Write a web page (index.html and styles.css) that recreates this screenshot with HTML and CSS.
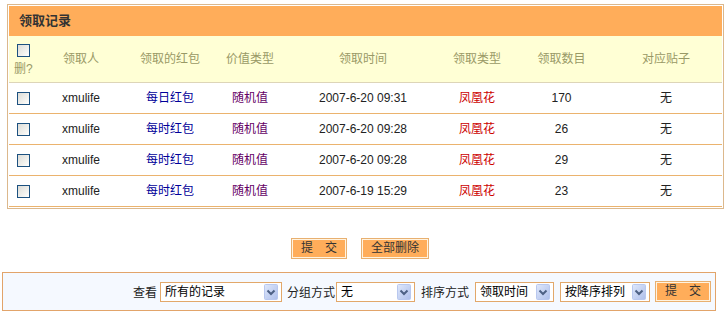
FILE: index.html
```html
<!DOCTYPE html>
<html lang="zh-CN">
<head>
    <meta charset="UTF-8">
    <title>领取记录</title>
    <link rel="stylesheet" href="styles.css">
</head>
<body>
    <div class="record_box">
        <table class="record_table">
            <colgroup>
                <col style="width:28px">
                <col style="width:88px">
                <col style="width:90px">
                <col style="width:70px">
                <col style="width:156px">
                <col style="width:72px">
                <col style="width:97px">
                <col style="width:112px">
            </colgroup>
            <tr class="title_row">
                <td colspan="8">领取记录</td>
            </tr>
            <tr class="head_row">
                <td class="del_cell"><input type="checkbox" class="chk"><br>删?</td>
                <td>领取人</td>
                <td>领取的红包</td>
                <td>价值类型</td>
                <td>领取时间</td>
                <td>领取类型</td>
                <td>领取数目</td>
                <td>对应贴子</td>
            </tr>
            <tr class="data_row">
                <td><input type="checkbox" class="chk"></td>
                <td>xmulife</td>
                <td class="packet">每日红包</td>
                <td class="value_type">随机值</td>
                <td>2007-6-20 09:31</td>
                <td class="get_type">凤凰花</td>
                <td>170</td>
                <td>无</td>
            </tr>
            <tr class="data_row">
                <td><input type="checkbox" class="chk"></td>
                <td>xmulife</td>
                <td class="packet">每时红包</td>
                <td class="value_type">随机值</td>
                <td>2007-6-20 09:28</td>
                <td class="get_type">凤凰花</td>
                <td>26</td>
                <td>无</td>
            </tr>
            <tr class="data_row">
                <td><input type="checkbox" class="chk"></td>
                <td>xmulife</td>
                <td class="packet">每时红包</td>
                <td class="value_type">随机值</td>
                <td>2007-6-20 09:28</td>
                <td class="get_type">凤凰花</td>
                <td>29</td>
                <td>无</td>
            </tr>
            <tr class="data_row">
                <td><input type="checkbox" class="chk"></td>
                <td>xmulife</td>
                <td class="packet">每时红包</td>
                <td class="value_type">随机值</td>
                <td>2007-6-19 15:29</td>
                <td class="get_type">凤凰花</td>
                <td>23</td>
                <td>无</td>
            </tr>
        </table>
    </div>

    <div class="actions">
        <button class="btn">提　交</button>
        <button class="btn">全部删除</button>
    </div>

    <div class="filter_bar">
        <span class="label">查看</span>
        <span class="sel sel_view">
            <select><option>所有的记录</option></select>
            <svg class="arrow" width="14" height="16" viewBox="0 0 14 16">
                <defs>
                    <linearGradient id="ag" x1="0" y1="0" x2="1" y2="1">
                        <stop offset="0" stop-color="#dfe8fb"/>
                        <stop offset="1" stop-color="#aebfeb"/>
                    </linearGradient>
                </defs>
                <rect x="0.5" y="0.5" width="13" height="15" rx="1" fill="url(#ag)" stroke="#b9c8ef"/>
                <path d="M3.5 6.5 L7 10 L10.5 6.5" fill="none" stroke="#4d6185" stroke-width="2"/>
            </svg>
        </span>
        <span class="label label_group">分组方式</span>
        <span class="sel sel_group">
            <select><option>无</option></select>
            <svg class="arrow" width="14" height="16" viewBox="0 0 14 16">
                <rect x="0.5" y="0.5" width="13" height="15" rx="1" fill="url(#ag)" stroke="#b9c8ef"/>
                <path d="M3.5 6.5 L7 10 L10.5 6.5" fill="none" stroke="#4d6185" stroke-width="2"/>
            </svg>
        </span>
        <span class="label label_sort">排序方式</span>
        <span class="sel sel_sort">
            <select><option>领取时间</option></select>
            <svg class="arrow" width="14" height="16" viewBox="0 0 14 16">
                <rect x="0.5" y="0.5" width="13" height="15" rx="1" fill="url(#ag)" stroke="#b9c8ef"/>
                <path d="M3.5 6.5 L7 10 L10.5 6.5" fill="none" stroke="#4d6185" stroke-width="2"/>
            </svg>
        </span>
        <span class="sel sel_order">
            <select><option>按降序排列</option></select>
            <svg class="arrow" width="14" height="16" viewBox="0 0 14 16">
                <rect x="0.5" y="0.5" width="13" height="15" rx="1" fill="url(#ag)" stroke="#b9c8ef"/>
                <path d="M3.5 6.5 L7 10 L10.5 6.5" fill="none" stroke="#4d6185" stroke-width="2"/>
            </svg>
        </span>
        <button class="btn btn_small">提　交</button>
    </div>
</body>
</html>
```
FILE: styles.css
```css
*{
    margin:0;
    padding:0;
}
body{
    font-family:"Liberation Sans","Noto Sans CJK SC",sans-serif;
    font-size:12px;
    color:#222;
    background:#fff;
}
.record_box{
    margin:4px 3px 0 7px;
    border:1px solid #dcb88c;
    padding:1px;
    background:#fff;
}
.record_table{
    width:100%;
    table-layout:fixed;
    border-collapse:separate;
    border-spacing:0;
}
.record_table td{
    padding:0;
    text-align:center;
    vertical-align:middle;
    line-height:16px;
}
.title_row td{
    height:30px;
    background:#ffad5a;
    text-align:left;
    padding-left:10px;
    font-weight:bold;
    font-size:13px;
    color:#333;
}
.head_row td{
    box-sizing:border-box;
    height:47px;
    background:#ffffd5;
    color:#999966;
    border-bottom:1px solid #ddd5b8;
}
.head_row .del_cell{
    text-align:left;
    padding-left:5px;
    padding-top:2px;
}
.head_row .del_cell .chk{
    margin-left:3px;
    margin-bottom:4px;
}
.data_row td{
    box-sizing:border-box;
    height:31px;
    border-bottom:1px solid #ebb36e;
    color:#222;
}
.data_row .packet{
    color:#000099;
}
.data_row .value_type{
    color:#660066;
}
.data_row .get_type{
    color:#cc0000;
}
.chk{
    -webkit-appearance:none;
    appearance:none;
    display:inline-block;
    width:13px;
    height:13px;
    border:1px solid #1c5180;
    background:linear-gradient(135deg,#dcdcd7 0%,#f4f4f1 70%,#ffffff 100%);
    vertical-align:middle;
}
.actions{
    display:flex;
    justify-content:center;
    gap:14px;
    margin-top:29px;
    padding-right:7px;
}
.btn{
    width:56px;
    height:21px;
    border:1px solid #e8b070;
    box-shadow:inset 0 0 0 1px #fff3e0;
    background:#ffad5a;
    font-family:"Liberation Sans","Noto Sans CJK SC",sans-serif;
    font-size:12px;
    color:#333;
    line-height:19px;
    cursor:pointer;
}
.actions .btn + .btn{
    width:68px;
}
.filter_bar{
    display:flex;
    align-items:center;
    justify-content:flex-end;
    width:714px;
    height:39px;
    box-sizing:border-box;
    margin:13px 0 0 2px;
    padding-right:4px;
    border:1px solid #e2a46a;
    background:#f5f9ff;
    color:#222;
}
.label{
    margin-right:3px;
}
.label_group{
    margin-left:5px;
    margin-right:1px;
}
.label_sort{
    margin-left:6px;
    margin-right:6px;
}
.sel{
    position:relative;
    display:inline-block;
    height:20px;
}
.sel select{
    -webkit-appearance:none;
    appearance:none;
    height:20px;
    border:1px solid #e2a86a;
    border-radius:0;
    background:#fff;
    font-family:"Liberation Sans","Noto Sans CJK SC",sans-serif;
    font-size:12px;
    color:#000;
    padding:0 18px 0 4px;
    outline:none;
}
.sel .arrow{
    position:absolute;
    right:4px;
    top:2px;
    pointer-events:none;
}
.sel_view select{
    width:122px;
}
.sel_group select{
    width:79px;
}
.sel_sort select{
    width:79px;
}
.sel_order{
    margin-left:6px;
}
.sel_order select{
    width:90px;
}
.btn_small{
    margin-left:5px;
}
```
